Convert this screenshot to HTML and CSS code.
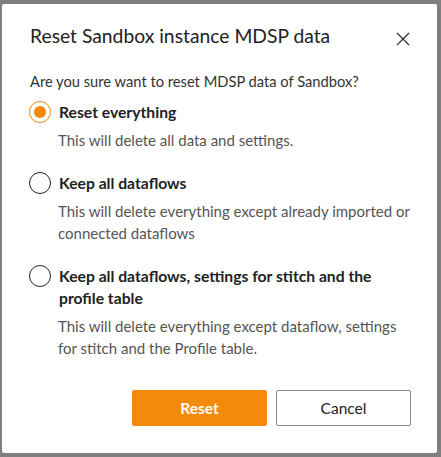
FILE: index.html
```html
<!DOCTYPE html>
<html lang="en">
<head>
<meta charset="utf-8">
<title>Reset Sandbox instance MDSP data</title>
<link rel="stylesheet" href="styles.css">
</head>
<body>
<div class="dialog" role="dialog" aria-labelledby="dlg-title">
  <div class="header">
    <h1 id="dlg-title" class="title">Reset Sandbox instance MDSP data</h1>
    <button class="close" aria-label="Close">
      <svg width="14" height="14" viewBox="0 0 14 14"><path d="M1 1L13 13M13 1L1 13" stroke="#333" stroke-width="1.3" fill="none"/></svg>
    </button>
  </div>
  <p class="question">Are you sure want to reset MDSP data of Sandbox?</p>
  <div class="options">
    <label class="option">
      <span class="row">
        <span class="radio checked"><span class="dot"></span></span>
        <span class="label">Reset everything</span>
      </span>
      <span class="desc">This will delete all data and settings.</span>
    </label>
    <label class="option">
      <span class="row">
        <span class="radio"></span>
        <span class="label">Keep all dataflows</span>
      </span>
      <span class="desc">This will delete everything except already imported or connected dataflows</span>
    </label>
    <label class="option">
      <span class="row">
        <span class="radio"></span>
        <span class="label">Keep all dataflows, settings for stitch and the profile table</span>
      </span>
      <span class="desc">This will delete everything except dataflow, settings for stitch and the Profile table.</span>
    </label>
  </div>
  <div class="actions">
    <button class="btn primary">Reset</button>
    <button class="btn secondary">Cancel</button>
  </div>
</div>
</body>
</html>
```
FILE: styles.css
```css
html, body {
  margin: 0;
  padding: 0;
}
body {
  background: #7f7f7f;
  width: 441px;
  height: 457px;
  overflow: hidden;
  font-family: "Lato", "Liberation Sans", sans-serif;
  color: #222;
}
.dialog {
  box-sizing: border-box;
  margin: 4px 0 0 2px;
  width: 435px;
  height: 449px;
  background: #fff;
  border-radius: 2px;
  padding: 18px 26px 27px 28px;
  display: flex;
  flex-direction: column;
}
.header {
  display: flex;
  justify-content: space-between;
  align-items: center;
  height: 28px;
}
.title {
  margin: 0;
  font-size: 19.3px;
  line-height: 28px;
  font-weight: 400;
  color: #222;
}
.close {
  border: 0;
  background: none;
  padding: 0;
  margin-right: 1px;
  width: 14px;
  height: 14px;
  display: flex;
  margin-top: 6px;
}
.question {
  margin: 20px 0 0 0;
  font-size: 14.7px;
  line-height: 22px;
  color: #333;
}
.options {
  margin: 9px -6px 0 -1px;
  display: flex;
  flex-direction: column;
  gap: 21px;
}
.option {
  display: flex;
  flex-direction: column;
}
.row {
  display: flex;
  align-items: flex-start;
  gap: 8px;
}
.radio {
  flex: none;
  box-sizing: border-box;
  width: 22px;
  height: 22px;
  border-radius: 50%;
  border: 1.5px solid #222;
  display: flex;
  align-items: center;
  justify-content: center;
}
.radio.checked {
  border-color: #f5890a;
}
.dot {
  width: 12px;
  height: 12px;
  border-radius: 50%;
  background: #f5890a;
}
.label {
  max-width: 340px;
  font-size: 15.7px;
  line-height: 22px;
  font-weight: 700;
  color: #222;
}
.desc {
  margin: 6px 0 0 29px;
  font-size: 15px;
  line-height: 22px;
  color: #555;
}
.actions {
  margin-top: auto;
  display: flex;
  justify-content: flex-end;
  gap: 9px;
}
.btn {
  box-sizing: border-box;
  width: 135px;
  height: 36px;
  border-radius: 2px;
  font-family: inherit;
  font-size: 15.5px;
}
.primary {
  background: #f5890a;
  border: 0;
  color: #fff;
  font-weight: 700;
}
.secondary {
  background: #fff;
  border: 1px solid #888;
  color: #222;
}
```
